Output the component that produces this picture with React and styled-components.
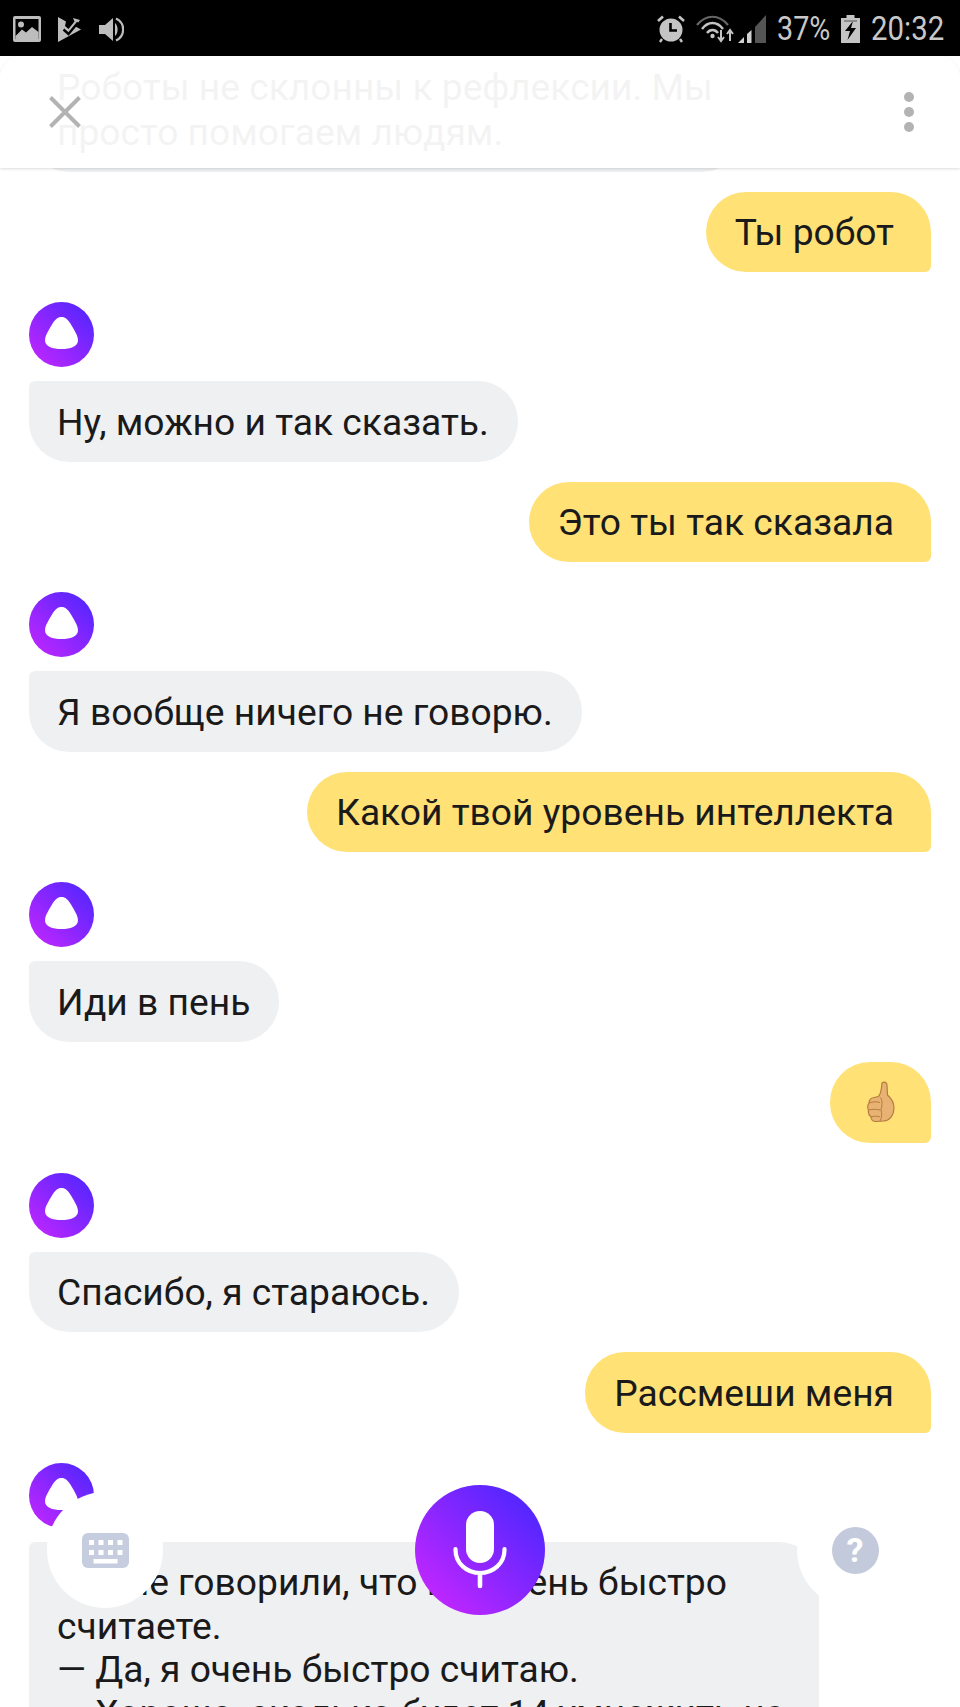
import styled, { createGlobalStyle } from "styled-components";

const GRADIENT_ID = "alice-gradient";

const Global = createGlobalStyle`
  html, body {
    margin: 0;
    padding: 0;
    background: #fff;
    font-family: Roboto, "Liberation Sans", sans-serif;
  }
`;

function GradientDefs() {
  return (
    <svg width="0" height="0" style={{ position: "absolute" }}>
      <defs>
        <linearGradient id={GRADIENT_ID} x1="0.1" y1="0.9" x2="0.9" y2="0.1">
          <stop offset="0" stopColor="#bc26ff" />
          <stop offset="1" stopColor="#5526ff" />
        </linearGradient>
      </defs>
    </svg>
  );
}

function AliceLogo() {
  return (
    <svg width="65" height="65" viewBox="0 0 65 65">
      <circle cx="32.5" cy="32.5" r="32.5" fill={`url(#${GRADIENT_ID})`} />
      <path
        d="M32.5 15C36.5 15 39 17.5 42 22.5C45.5 28.5 49 33.5 49 38.5C49 44.5 41.5 47 32.5 47C23.5 47 16 44.5 16 38.5C16 33.5 19.5 28.5 23 22.5C26 17.5 28.5 15 32.5 15Z"
        fill="#fff"
      />
    </svg>
  );
}

function ThumbsUp() {
  return (
    <svg width="28" height="42" viewBox="0 0 28 42">
      <path
        d="M15 2C17.5 0 20 1.5 20 4.5L20.5 14C24 17 27 21 27 27C27 34 23 39.5 17 40L9 40.5C5.5 40.5 4 38 4 36C2 34.5 1 32 1.5 29.5C0.5 27 0.5 24 2 22C2 19 4 17 7 16.5L11.5 15.5C14 13 14.5 8 15 2Z"
        fill="#e8b273"
        stroke="#b57c40"
        strokeWidth="1.2"
      />
      <path
        d="M2 22C6 20.5 10 20.5 13 21.5M1.8 29C6 28 9.5 28.2 13.5 29M4 36C7 35 10 35 13 35.8M13 16.5C15.5 18 15.5 24 14 28.5C15 32 15 37 13 40"
        fill="none"
        stroke="#b57c40"
        strokeWidth="1"
      />
    </svg>
  );
}

function ImageIcon() {
  return (
    <svg width="28" height="26" viewBox="0 0 28 26">
      <rect width="28" height="26" rx="2" fill="#bdbdbd" />
      <rect x="2.5" y="3" width="23" height="20" fill="#000" />
      <circle cx="8" cy="8.5" r="3" fill="#bdbdbd" />
      <path d="M2.5 20L9 13.5L13 16.5L19 11L25.5 16V23H2.5Z" fill="#bdbdbd" />
    </svg>
  );
}

function StoreCheckIcon() {
  return (
    <svg width="24" height="25" viewBox="0 0 24 25">
      <path
        d="M0 0L8 4.5L7 9L10.5 12L16.5 4.5L15 1L22 3L17.5 9.5L23 12.5L0 25Z"
        fill="#bdbdbd"
      />
      <path d="M5.5 12.5L10.5 17L20 5.5" fill="none" stroke="#000" strokeWidth="2.4" />
    </svg>
  );
}

function VolumeIcon() {
  return (
    <svg width="25" height="25" viewBox="0 0 25 25">
      <path d="M0 8H6L14 1V24L6 17H0Z" fill="#bdbdbd" />
      <path d="M16 6C19.5 9 19.5 16 16 19Z" fill="#bdbdbd" />
      <path
        d="M17 1.5C26.5 6 26.5 19 17 23.5"
        fill="none"
        stroke="#bdbdbd"
        strokeWidth="2.2"
      />
    </svg>
  );
}

function AlarmIcon() {
  return (
    <svg width="28" height="28" viewBox="0 0 28 28">
      <circle cx="14" cy="15" r="11.5" fill="#c4c4c4" />
      <path d="M13.5 8V15.5H20" fill="none" stroke="#000" strokeWidth="2.6" />
      <path d="M1 6L6 1.5M27 6L22 1.5" stroke="#c4c4c4" strokeWidth="2.6" />
      <path d="M5 24L3 27M23 24L25 27" stroke="#c4c4c4" strokeWidth="2.4" />
    </svg>
  );
}

function WifiIcon() {
  return (
    <svg width="39" height="28" viewBox="0 0 39 28">
      <path d="M1 10C10 -1 23 -1 32 10" fill="none" stroke="#666" strokeWidth="2.2" />
      <path d="M6 14C12 6 21 6 27 14" fill="none" stroke="#c4c4c4" strokeWidth="2.4" />
      <path d="M11 18C14 14 19 14 22 18" fill="none" stroke="#c4c4c4" strokeWidth="2.4" />
      <circle cx="16.5" cy="21" r="2.2" fill="#c4c4c4" />
      <path d="M25 15V25M22 22L25 26L28 22" fill="none" stroke="#c4c4c4" strokeWidth="2" />
      <path d="M34 26V16M31 19L34 15L37 19" fill="none" stroke="#c4c4c4" strokeWidth="2" />
    </svg>
  );
}

function SignalIcon() {
  return (
    <svg width="28" height="28" viewBox="0 0 28 28">
      <path d="M0 28L6 22V28Z" fill="#d0d0d0" />
      <path d="M9 19L13.5 15V28H9Z" fill="#d0d0d0" />
      <path d="M17 12L28 0V28H17Z" fill="#555" />
    </svg>
  );
}

function BatteryIcon() {
  return (
    <svg width="19" height="28" viewBox="0 0 19 28">
      <path d="M5.5 0H13.5V3H19V28H0V3H5.5Z" fill="#c4c4c4" />
      <path d="M12 6L4 16H9L6.5 25L15 13H10Z" fill="#000" />
      <path d="M3 5H16V7H3Z" fill="#8a8a8a" />
    </svg>
  );
}

function KeyboardIcon() {
  const keys = [];
  for (const y of [7, 17]) {
    for (const x of [7, 16.5, 26, 35.5]) {
      keys.push(<rect key={`${x}-${y}`} x={x} y={y} width="5" height="5" fill="#fff" />);
    }
  }
  return (
    <svg width="47" height="35" viewBox="0 0 47 35">
      <rect width="47" height="35" rx="6" fill="#c5cddf" />
      {keys}
      <rect x="11.5" y="26" width="24" height="4.5" fill="#fff" />
    </svg>
  );
}

function MicIcon() {
  return (
    <svg width="66" height="78" viewBox="0 0 66 78">
      <rect x="19" y="0" width="28" height="52" rx="14" fill="#fff" />
      <path
        d="M8.5 38V39C8.5 52 19.5 62 33 62C46.5 62 57.5 52 57.5 39V38"
        fill="none"
        stroke="#fff"
        strokeWidth="4.2"
        strokeLinecap="round"
      />
      <path d="M33 62V75" stroke="#fff" strokeWidth="4.6" strokeLinecap="round" />
    </svg>
  );
}

function CloseIcon() {
  return (
    <svg width="32" height="32" viewBox="0 0 32 32">
      <path d="M1.5 1.5L30.5 30.5M30.5 1.5L1.5 30.5" stroke="#b3b3b3" strokeWidth="4" />
    </svg>
  );
}

function App() {
  return (
    <Screen>
      <Global />
      <GradientDefs />
      <Chat>
        <Bubble>
          Роботы не склонны к рефлексии. Мы
          <br />
          просто помогаем людям.
        </Bubble>
        <UserBubble>Ты робот</UserBubble>
        <Avatar>
          <AliceLogo />
        </Avatar>
        <Bubble>Ну, можно и так сказать.</Bubble>
        <UserBubble>Это ты так сказала</UserBubble>
        <Avatar>
          <AliceLogo />
        </Avatar>
        <Bubble>Я вообще ничего не говорю.</Bubble>
        <UserBubble>Какой твой уровень интеллекта</UserBubble>
        <Avatar>
          <AliceLogo />
        </Avatar>
        <Bubble>Иди в пень</Bubble>
        <EmojiBubble>
          <ThumbsUp />
        </EmojiBubble>
        <Avatar>
          <AliceLogo />
        </Avatar>
        <Bubble>Спасибо, я стараюсь.</Bubble>
        <UserBubble>Рассмеши меня</UserBubble>
        <Avatar>
          <AliceLogo />
        </Avatar>
        <LongBubble>
          — Мне говорили, что вы очень быстро
          <br />
          считаете.
          <br />— Да, я очень быстро считаю.
          <br />— Хорошо, сколько будет 14 умножить на
          <br />
          17?
        </LongBubble>
      </Chat>

      <StatusBar>
        <StatusGroup>
          <ImageIcon />
          <StatusIcons>
            <StoreCheckIcon />
            <VolumeIcon />
          </StatusIcons>
        </StatusGroup>
        <StatusRight>
          <AlarmIcon />
          <SignalPair>
            <WifiIcon />
            <SignalIcon />
          </SignalPair>
          <StatusText $w={53} $sx={0.87}>
            37%
          </StatusText>
          <BatteryIcon />
          <StatusText $w={73} $sx={0.89}>
            20:32
          </StatusText>
        </StatusRight>
      </StatusBar>

      <Header>
        <CloseIcon />
        <Dots>
          <Dot />
          <Dot />
          <Dot />
        </Dots>
      </Header>

      <Dock>
        <SideButton>
          <KeyboardIcon />
        </SideButton>
        <MicButton>
          <MicIcon />
        </MicButton>
        <SideButton>
          <HelpIcon>?</HelpIcon>
        </SideButton>
      </Dock>
    </Screen>
  );
}

const Screen = styled.div`
  position: relative;
  width: 960px;
  height: 1707px;
  overflow: hidden;
  background: #fff;
`;

const Chat = styled.div`
  display: flex;
  flex-direction: column;
  align-items: flex-start;
  padding: 46px 29px 0;
`;

const Bubble = styled.div`
  box-sizing: border-box;
  padding: 18.5px 29px 17px 28px;
  margin-bottom: 20px;
  background: #eff0f2;
  border-radius: 6px 40px 40px 40px;
  color: #1a1a1a;
  font-size: 37.2px;
  line-height: 45px;
  white-space: nowrap;
`;

const LongBubble = styled(Bubble)`
  width: 790px;
  padding-top: 19.5px;
  line-height: 43.5px;
  white-space: normal;
`;

const UserBubble = styled(Bubble)`
  align-self: flex-end;
  padding-left: 29px;
  padding-right: 37px;
  margin-bottom: 30px;
  background: #ffe176;
  border-radius: 40px 40px 6px 40px;
`;

const EmojiBubble = styled(UserBubble)`
  display: flex;
  align-items: center;
  height: 81px;
  padding: 0 36px 0 37px;
`;

const Avatar = styled.div`
  width: 65px;
  height: 65px;
  margin-bottom: 14px;

  svg {
    display: block;
  }
`;

const StatusBar = styled.div`
  position: absolute;
  top: 0;
  left: 0;
  right: 0;
  height: 56px;
  padding: 2px 16px 0 13px;
  box-sizing: border-box;
  display: flex;
  align-items: center;
  justify-content: space-between;
  background: #000;
`;

const StatusGroup = styled.div`
  display: flex;
  align-items: center;
  gap: 17px;
`;

const StatusIcons = styled.div`
  display: flex;
  align-items: center;
  gap: 17px;
`;

const StatusRight = styled.div`
  display: flex;
  align-items: center;
  gap: 11px;
`;

const SignalPair = styled.div`
  display: flex;
  align-items: center;
  gap: 3px;
`;

const StatusText = styled.span`
  display: inline-block;
  width: ${(p) => p.$w}px;
  color: #c8c8c8;
  font-size: 33px;
  line-height: 36px;
  white-space: nowrap;
  transform: scaleX(${(p) => p.$sx});
  transform-origin: left center;
`;

const Header = styled.div`
  position: absolute;
  top: 56px;
  left: 0;
  right: 0;
  height: 112px;
  padding: 0 46px 0 49px;
  box-sizing: border-box;
  display: flex;
  align-items: center;
  justify-content: space-between;
  background: rgba(255, 255, 255, 0.95);
  border-radius: 22px 22px 0 0;
  box-shadow: 0 1px 3px rgba(0, 0, 0, 0.14);
`;

const Dots = styled.div`
  display: flex;
  flex-direction: column;
  gap: 5px;
`;

const Dot = styled.div`
  width: 10px;
  height: 10px;
  border-radius: 50%;
  background: #b3b3b3;
`;

const Dock = styled.div`
  position: absolute;
  left: 47px;
  right: 47px;
  top: 1485px;
  height: 130px;
  display: flex;
  align-items: center;
  justify-content: space-between;
`;

const SideButton = styled.div`
  width: 116px;
  height: 116px;
  border-radius: 50%;
  background: #fff;
  display: flex;
  align-items: center;
  justify-content: center;
`;

const MicButton = styled.div`
  width: 130px;
  height: 130px;
  border-radius: 50%;
  background: linear-gradient(45deg, #bc26ff 15%, #5526ff 85%);
  display: flex;
  align-items: center;
  justify-content: center;
`;

const HelpIcon = styled.div`
  width: 47px;
  height: 47px;
  border-radius: 50%;
  background: #c3cadb;
  color: #fff;
  font-size: 34px;
  font-weight: 700;
  line-height: 47px;
  text-align: center;
`;

export default App;
